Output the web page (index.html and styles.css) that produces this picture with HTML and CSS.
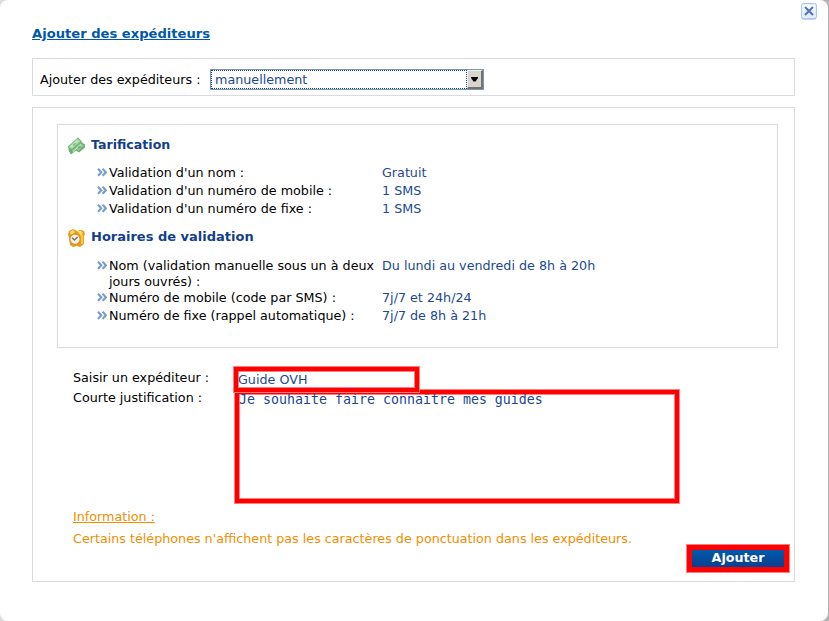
FILE: index.html
```html
<!DOCTYPE html>
<html lang="fr">
<head>
<meta charset="utf-8">
<title>Ajouter des expéditeurs</title>
<link rel="stylesheet" href="styles.css">
</head>
<body>
<svg class="defs" aria-hidden="true">
  <symbol id="bullet" viewBox="0 0 10 9"><path d="M1 .8 4.3 4.3 1 7.8M5.6.8 8.9 4.3 5.6 7.8" fill="none" stroke="#759dcb" stroke-width="2.1"/></symbol>
</svg>
<main class="dialog">
  <button class="close" aria-label="Fermer"><svg viewBox="0 0 16 17"><rect x=".5" y="1" width="15" height="15.5" rx="2" fill="#83aadf"/><rect x=".5" y=".5" width="15" height="15" rx="2" fill="#e3eefd" stroke="#a9c9f3"/><path d="M2 2h12v5H2z" fill="#f7faff"/><path d="m4 4 8 8m0-8-8 8" stroke="#5570b8" stroke-width="2"/></svg></button>
  <h1><span>Ajouter des expéditeurs</span></h1>
  <section class="panel mode">
    <span class="mode-label">Ajouter des expéditeurs :</span>
    <div class="select"><span class="value">manuellement</span><span class="arrow"><svg viewBox="0 0 7 5"><path d="M0 0h7v1L4.5 4.5h-2L0 1z"/></svg></span></div>
  </section>
  <section class="panel form">
    <div class="info">
      <h2 class="narrow"><svg class="icon" viewBox="0 0 17 17"><path d="M0 9 10 0l3 3 1 2 3 2v3l-6 5-3-2-5 4-2-3z" fill="#6fb173"/><path d="m.8 9.2 8.8-8.3 3 2.8-8.8 8z" fill="#b3dfb2" stroke="#83bd85" stroke-width=".7"/><path d="m4 13 8.5-7.5 3.7 2.7-5.7 5.2-2.5-1.8-4 3.4z" fill="#9ad39c" stroke="#6cae72" stroke-width=".7"/><path d="m3 9 6-5.5M5 14l8-7" stroke="#d0edce"/><ellipse cx="11.5" cy="9.8" rx="2" ry="1.3" transform="rotate(-35 11.5 9.8)" fill="#72b77a"/><ellipse cx="6.5" cy="6.8" rx="2" ry="1.2" transform="rotate(-40 6.5 6.8)" fill="#87c58a"/></svg>Tarification</h2>
      <dl class="rates">
        <dt><svg class="bullet"><use href="#bullet"/></svg><span>Validation d'un nom :</span></dt><dd>Gratuit</dd>
        <dt><svg class="bullet"><use href="#bullet"/></svg><span>Validation d'un numéro de mobile :</span></dt><dd>1 SMS</dd>
        <dt><svg class="bullet"><use href="#bullet"/></svg><span>Validation d'un numéro de fixe :</span></dt><dd>1 SMS</dd>
      </dl>
      <h2><svg class="icon" viewBox="0 0 17 18"><path d="M1 2 5 0l4 2 4-1 3 1 1 3-1 2v8l-4 3-3-1-4 1-3-2-1-8-1-2z" fill="#e79a1c"/><path d="m2 3 3-2 2 2-4 3zm7-1 4 0 2 2-2 3z" fill="#ffe06b"/><path d="M14 6v9" stroke="#fbc93c" stroke-width="2.5"/><circle cx="7" cy="10.2" r="5.2" fill="#f5f2e8" stroke="#dc8e1c" stroke-width="1.2"/><path d="M4 8.7 6.5 11l3-3" fill="none" stroke="#756c67" stroke-width="1.4"/></svg>Horaires de validation</h2>
      <dl class="hours">
        <dt><svg class="bullet"><use href="#bullet"/></svg><span class="wrap">Nom (validation manuelle sous un à deux<br>jours ouvrés) :</span></dt><dd>Du lundi au vendredi de 8h à 20h</dd>
        <dt><svg class="bullet"><use href="#bullet"/></svg><span>Numéro de mobile (code par SMS) :</span></dt><dd>7j/7 et 24h/24</dd>
        <dt><svg class="bullet"><use href="#bullet"/></svg><span>Numéro de fixe (rappel automatique) :</span></dt><dd>7j/7 de 8h à 21h</dd>
      </dl>
    </div>
    <div class="fields">
      <div class="labels"><label for="sender">Saisir un expéditeur :</label><label for="reason">Courte justification :</label></div>
      <div class="inputs"><input id="sender" value="Guide OVH"><textarea id="reason" spellcheck="false">Je souhaite faire connaître mes guides</textarea></div>
    </div>
    <div class="notice"><p><u>Information :</u></p><p>Certains téléphones n'affichent pas les caractères de ponctuation dans les expéditeurs.</p></div>
    <button class="submit">Ajouter</button>
  </section>
</main>
</body>
</html>
```
FILE: styles.css
```css
* { box-sizing: border-box; }
body { margin: 0; background: linear-gradient(90deg, #ddd, #b3b3b3); font: 12.73px/18px "DejaVu Sans", sans-serif; color: #000; }
.defs { position: absolute; width: 0; height: 0; }
.dialog { position: relative; width: 828px; height: 621px; padding: 25px 33px 0 32px; background: #fff; border-radius: 8px; }
.close { position: absolute; top: 3px; left: 801px; width: 16px; height: 17px; padding: 0; border: 0; background: none; }
.close svg, .arrow svg { display: block; width: 100%; height: 100%; }
h1 { height: 33px; margin: 0; font-size: 13.12px; line-height: 18px; color: #0058a8; text-decoration: underline; }
.panel { width: 763px; border: 1px solid #dadae3; }
.mode { display: flex; height: 38px; padding: 10px 0 0 7px; }
.mode-label { width: 170px; padding-top: 2px; white-space: nowrap; }
.select { display: flex; width: 274px; height: 21px; border: 1px solid #7996b5; color: #1c4890; }
.value { flex: 1; padding-left: 3px; border: 1px dotted #123f91; line-height: 17px; }
.arrow { width: 16px; height: 19px; padding: 6px 3px; border: 1px solid #f2f0ea; border-right: 2px solid #77736c; border-bottom: 2px solid #77736c; background: #d8d5ce; }
.arrow .arrow svg, .arrow svg { width: 7px; height: 5px; }
.form { height: 475px; margin-top: 11px; padding: 16px 0 0 24px; }
.info { width: 721px; height: 224px; padding: 10px 0 0 10px; border: 1px solid #dadae3; }
h2 { display: flex; align-items: center; height: 20px; margin: 0; font-size: 13px; color: #133f8a; }
.narrow { font-size: 12.6px; }
.icon { width: 17px; height: 18px; margin: 2px 6px 0 0; }
dl { display: grid; grid-template-columns: 285px 1fr; grid-auto-rows: 18px; margin: 0 0 0 29px; white-space: nowrap; }
.rates { margin-top: 9px; margin-bottom: 9px; }
.hours { grid-template-rows: 32px; margin-top: 10px; }
dt { display: flex; }
dd { margin: 0; color: #1c4890; }
.bullet { flex: none; width: 10px; height: 9px; margin: 4px 2px 0 0; }
.wrap { line-height: 16px; padding-top: 1px; }
.fields { display: flex; height: 155px; padding: 19px 0 0 16px; }
.labels { display: flex; flex-direction: column; gap: 2px; width: 161px; padding-top: 2px; }
.inputs { display: flex; flex-direction: column; }
input, textarea { display: block; margin: 0; border: 4px solid #f00; border-radius: 0; outline: 0; box-shadow: 0 0 0 1px #ff8080, inset 0 0 0 1px #ff8080; background: #fff; color: #1c4890; resize: none; }
input { position: relative; width: 185px; height: 25px; padding: 0; font: 12.73px "DejaVu Sans", sans-serif; }
textarea { width: 444px; height: 113px; margin: -2px 0 0 1px; padding: 0; overflow: hidden; font: 13.29px/12px "DejaVu Sans Mono", monospace; }
.notice { padding: 5px 0 0 16px; color: #f18e00; }
.notice p { margin: 0 0 4px; white-space: nowrap; }
.submit { display: block; width: 102px; height: 27px; margin: -7px 0 0 630px; padding: 0 0 2px; border: 5px solid #f00; box-shadow: 0 0 0 1px #ff8080; background: linear-gradient(#0059a9, #0b3f91) padding-box; color: #fff; font: bold 12.7px/15px "DejaVu Sans", sans-serif; }
```
